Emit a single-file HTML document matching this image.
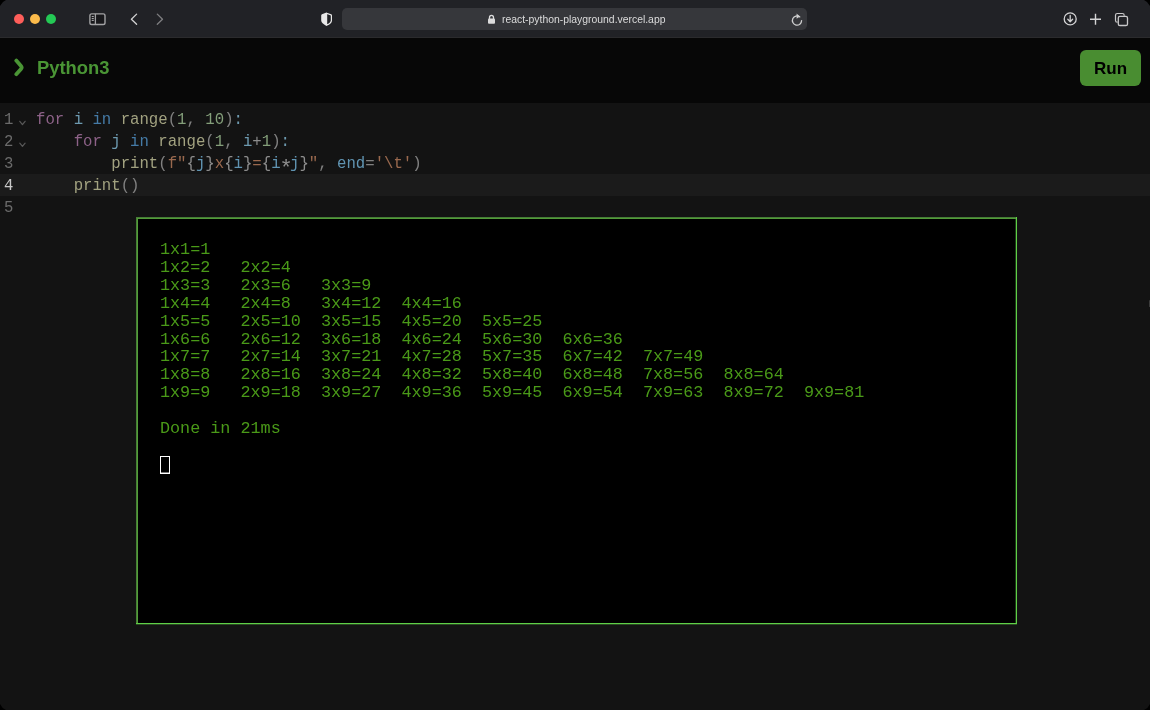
<!DOCTYPE html>
<html><head><meta charset="utf-8">
<style>
html,body{margin:0;padding:0;width:1150px;height:710px;overflow:hidden;background:#000;}
body{position:relative;font-family:"Liberation Sans",sans-serif;}
#win *{will-change:transform;}
#win{position:absolute;left:0;top:0;width:1150px;height:710px;overflow:hidden;background:#131313;}
#toolbar{position:absolute;left:0;top:0;width:1150px;height:37px;background:#212226;}
#tbline{position:absolute;left:0;top:37px;width:1150px;height:1px;background:#2b2b2d;}
.dot{position:absolute;top:14px;width:10px;height:10px;border-radius:50%;}
#url{position:absolute;left:342px;top:8px;width:465px;height:22px;border-radius:5px;background:#36373b;}
#urltext{position:absolute;left:502px;top:13px;font-size:10.4px;line-height:14px;color:#dcdcdc;white-space:nowrap;}
#header{position:absolute;left:0;top:38px;width:1150px;height:65px;background:#070707;}
#title{position:absolute;left:37px;top:57px;font-size:18.4px;font-weight:bold;color:#4a9535;line-height:22px;white-space:nowrap;}
#run{position:absolute;left:1080px;top:50px;width:61px;height:36px;border-radius:6px;background:#498d31;}
#runtext{position:absolute;left:1093.6px;top:57.6px;font-size:17px;font-weight:bold;color:#000;line-height:22px;}
#editor{position:absolute;left:0;top:103px;width:1150px;height:607px;background:#131313;}
#active{position:absolute;left:0;top:174px;width:1150px;height:22px;background:#1b1b1b;}
.ln{position:absolute;left:4px;font-family:"Liberation Mono",monospace;font-size:15.6px;line-height:22px;color:#6b6b6b;}
.code{position:absolute;left:36px;font-family:"Liberation Mono",monospace;font-size:15.68px;line-height:22px;color:#bdbdbd;white-space:pre;}
.k{color:#8d6288}.v{color:#6d9ab0}.b{color:#457ba7}.e{color:#6094b2}.fn{color:#a2a280}.n{color:#849f7a}.p{color:#808080}.s{color:#9a694e}.br{color:#8d8d8d}
#term{position:absolute;left:136px;top:217px;width:881px;height:407px;background:#000;}
.bl{position:absolute;}
#out{position:absolute;left:160px;top:241.2px;font-family:"Liberation Mono",monospace;font-size:16.78px;line-height:17.9px;color:#4a9a18;white-space:pre;}
#cursor{position:absolute;left:160px;top:456px;width:8px;height:15.6px;border:1px solid #fff;box-shadow:inset 0 -1px 0 #777;}
</style></head>
<body>
<div id="win">
  <div id="toolbar"></div>
  <div id="tbline"></div>
  <div class="dot" style="left:14.2px;top:14.1px;background:#fe5e5a"></div>
  <div class="dot" style="left:30.2px;top:14.1px;background:#fcbb4b"></div>
  <div class="dot" style="left:46.2px;top:14.1px;background:#24c955"></div>
  <div id="url"></div>

  <svg style="position:absolute;left:0;top:0" width="1150" height="38" viewBox="0 0 1150 38">
    <rect x="89.9" y="13.9" width="15.1" height="10.6" rx="1.8" fill="#18181b" stroke="#a2a2a4" stroke-width="1.4"/>
    <line x1="95.4" y1="13.9" x2="95.4" y2="24.5" stroke="#a2a2a4" stroke-width="1.3"/>
    <g stroke="#a8a8aa" stroke-width="1.1">
      <line x1="91.7" y1="16.5" x2="93.8" y2="16.5"/>
      <line x1="91.7" y1="18.5" x2="93.8" y2="18.5"/>
      <line x1="91.7" y1="20.4" x2="93.8" y2="20.4"/>
    </g>
    <polyline points="136.6,14.1 131.4,19.2 136.6,24.3" fill="none" stroke="#d2d2d3" stroke-width="1.3" stroke-linecap="round" stroke-linejoin="round"/>
    <polyline points="157.3,14.1 162.5,19.2 157.3,24.3" fill="none" stroke="#7e7e80" stroke-width="1.3" stroke-linecap="round" stroke-linejoin="round"/>
    <path d="M326.4,12.5 L322,14.3 Q321.2,14.6 321.2,15.4 L321.2,20.6 Q321.4,23.4 326.4,25.9 Z" fill="#e8e8e8"/>
    <path d="M326.6,13.2 L331,14.9 Q331.4,15.1 331.4,15.6 L331.4,20.6 Q331.2,23.2 326.6,25.3 Z" fill="none" stroke="#e8e8e8" stroke-width="1.2" stroke-linejoin="round"/>
    <path d="M489.5,19 L489.5,17.6 A2,2.2 0 0 1 493.5,17.6 L493.5,19" fill="none" stroke="#dcdcdc" stroke-width="1.3"/>
    <rect x="488" y="18.6" width="7" height="5.2" rx="1" fill="#dcdcdc"/>
    <path d="M799.8,16.9 A4.6,4.6 0 1 0 801.6,20.6" fill="none" stroke="#cfcfd0" stroke-width="1.3" stroke-linecap="round"/>
    <path d="M796.6,13.4 L799.9,16.6 L796.6,18.8 Z" fill="#cfcfd0"/>
    <circle cx="1070.2" cy="18.9" r="6" fill="none" stroke="#d4d4d5" stroke-width="1.3"/>
    <path d="M1070.2,15.4 L1070.2,21.6 M1067.8,19.3 L1070.2,21.7 L1072.6,19.3" fill="none" stroke="#d4d4d5" stroke-width="1.3" stroke-linecap="round" stroke-linejoin="round"/>
    <path d="M1090,19.3 L1101,19.3 M1095.5,13.8 L1095.5,24.8" fill="none" stroke="#d4d4d5" stroke-width="1.4"/>
    <path d="M1117.6,22.2 L1117.3,22.2 A1.8,1.8 0 0 1 1115.5,20.4 L1115.5,15.3 A1.8,1.8 0 0 1 1117.3,13.5 L1122.4,13.5 A1.8,1.8 0 0 1 1124.2,15.3 L1124.2,15.8" fill="none" stroke="#c8c8c9" stroke-width="1.2"/>
    <rect x="1118.3" y="16.3" width="9.2" height="9.2" rx="1.6" fill="none" stroke="#c8c8c9" stroke-width="1.3"/>
  </svg>
  <div id="urltext">react-python-playground.vercel.app</div>

  <div id="header"></div>
  <svg style="position:absolute;left:0;top:38px" width="40" height="65" viewBox="0 38 40 65">
    <path d="M16.3,60.6 L21,65.9 Q22.3,67.4 21,68.9 L16.3,74.2" fill="none" stroke="#4a9535" stroke-width="3.8" stroke-linecap="round" stroke-linejoin="round"/>
  </svg>
  <div id="title">Python3</div>
  <div id="run"></div>
  <div id="runtext">Run</div>

  <div id="editor"></div>
  <div id="active"></div>
  <div class="ln" style="top:109px">1</div>
  <div class="ln" style="top:131px">2</div>
  <div class="ln" style="top:153px">3</div>
  <div class="ln" style="top:175px;color:#c8c8c8">4</div>
  <div class="ln" style="top:197px">5</div>
  <div class="code" style="top:109px"><span class="k">for</span> <span class="v">i</span> <span class="b">in</span> <span class="fn">range</span><span class="p">(</span><span class="n">1</span><span class="p">,</span> <span class="n">10</span><span class="p">)</span><span class="v">:</span></div>
  <div class="code" style="top:131px">    <span class="k">for</span> <span class="v">j</span> <span class="b">in</span> <span class="fn">range</span><span class="p">(</span><span class="n">1</span><span class="p">,</span> <span class="v">i</span><span class="br">+</span><span class="n">1</span><span class="p">)</span><span class="v">:</span></div>
  <div class="code" style="top:153px">        <span class="fn">print</span><span class="p">(</span><span class="s">f"</span><span class="br">{</span><span class="e">j</span><span class="br">}</span><span class="s">x</span><span class="br">{</span><span class="e">i</span><span class="br">}</span><span class="s">=</span><span class="br">{</span><span class="e">i</span><span class="br" style="display:inline-block;transform:translate(0.3px,5.3px) scale(1.4)">*</span><span class="e">j</span><span class="br">}</span><span class="s">"</span><span class="p">,</span> <span class="e">end</span><span class="p">=</span><span class="s">'\t'</span><span class="p">)</span></div>
  <div class="code" style="top:175px">    <span class="fn">print</span><span class="p">()</span></div>

  <svg style="position:absolute;left:0;top:103px" width="36" height="60" viewBox="0 103 36 60">
    <polyline points="19.8,121.3 22.45,124.6 25.1,121.3" fill="none" stroke="#585858" stroke-width="1.2" stroke-linecap="round" stroke-linejoin="round"/>
    <polyline points="19.8,143.1 22.45,146.4 25.1,143.1" fill="none" stroke="#585858" stroke-width="1.2" stroke-linecap="round" stroke-linejoin="round"/>
  </svg>
  <div style="position:absolute;left:1148.6px;top:300.3px;width:1.4px;height:6.5px;border-radius:1px;background:#3c3c3c"></div>
  <div id="term"></div>
  <div class="bl" style="left:136px;top:217px;width:881px;height:1px;background:#467c35"></div>
  <div class="bl" style="left:137px;top:218px;width:879px;height:1px;background:#529c3a"></div>
  <div class="bl" style="left:136px;top:218px;width:1px;height:405px;background:#487f36"></div>
  <div class="bl" style="left:137px;top:219px;width:1px;height:404px;background:#539d3a"></div>
  <div class="bl" style="left:1015px;top:219px;width:1px;height:404px;background:#1c3e15"></div>
  <div class="bl" style="left:1016px;top:217px;width:1px;height:407px;background:#5fcf47"></div>
  <div class="bl" style="left:136px;top:623px;width:880px;height:1px;background:#5fcf47"></div>
  <div class="bl" style="left:136px;top:624px;width:881px;height:1px;background:#2a4b22"></div>
  <div id="out">1x1=1
1x2=2	2x2=4
1x3=3	2x3=6	3x3=9
1x4=4	2x4=8	3x4=12	4x4=16
1x5=5	2x5=10	3x5=15	4x5=20	5x5=25
1x6=6	2x6=12	3x6=18	4x6=24	5x6=30	6x6=36
1x7=7	2x7=14	3x7=21	4x7=28	5x7=35	6x7=42	7x7=49
1x8=8	2x8=16	3x8=24	4x8=32	5x8=40	6x8=48	7x8=56	8x8=64
1x9=9	2x9=18	3x9=27	4x9=36	5x9=45	6x9=54	7x9=63	8x9=72	9x9=81

Done in 21ms</div>
  <div id="cursor"></div>
  <svg style="position:absolute;left:0;top:0" width="1150" height="710" viewBox="0 0 1150 710">
    <path d="M0,0 L6,0 Q1.8,1.8 0,6 Z" fill="#000"/>
    <path d="M1150,0 L1144,0 Q1148.2,1.8 1150,6 Z" fill="#000"/>
    <path d="M0,710 L6,710 Q1.8,708.2 0,704 Z" fill="#000"/>
    <path d="M1150,710 L1144,710 Q1148.2,708.2 1150,704 Z" fill="#000"/>
  </svg>
</div>
</body></html>
